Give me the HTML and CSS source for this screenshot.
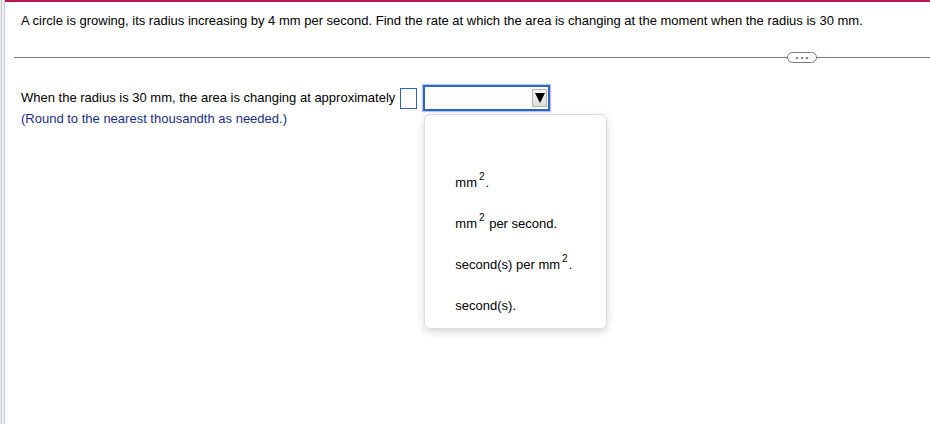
FILE: index.html
```html
<!DOCTYPE html>
<html lang="en">
<head>
<meta charset="utf-8">
<title>Related rates</title>
<link rel="stylesheet" href="styles.css">
</head>
<body>
<div class="page">
  <div class="content">
    <p class="question">A circle is growing, its radius increasing by 4 mm per second. Find the rate at which the area is changing at the moment when the radius is 30 mm.</p>
    <div class="divider">
      <span class="pill"><span class="dot"></span><span class="dot"></span><span class="dot"></span></span>
    </div>
    <div class="answer-row">
      <span class="answer-text">When the radius is 30 mm, the area is changing at approximately</span>
      <span class="num-box"></span>
      <span class="select-wrap">
        <span class="select">
          <span class="arrow-btn"><span class="tri"></span></span>
        </span>
        <div class="menu">
          <div class="item"><span class="label"></span></div>
          <div class="item"><span class="label">mm<sup class="sq">2</sup>.</span></div>
          <div class="item"><span class="label">mm<sup class="sq">2</sup> per second.</span></div>
          <div class="item"><span class="label">second(s) per mm<sup class="sq">2</sup>.</span></div>
          <div class="item"><span class="label">second(s).</span></div>
        </div>
      </span>
    </div>
    <p class="hint">(Round to the nearest thousandth as needed.)</p>
  </div>
</div>
</body>
</html>
```

FILE: styles.css
```css
html, body {
  margin: 0;
  padding: 0;
  height: 100%;
}
body {
  font-family: "Liberation Sans", Arial, sans-serif;
  font-size: 13px;
  color: #000;
  background: linear-gradient(to right, #ececec 0 1px, #c9c9c9 1px 2px, #f3f3f3 2px 4px, #b9c6dd 4px 5px, #ffffff 5px);
}
.page {
  margin-left: 5px;
  min-height: 100%;
  border-top: 2px solid #b8174f;
  box-sizing: border-box;
}
.content {
  padding: 11px 0 0 16px;
}
.question {
  margin: 0;
  line-height: 16px;
}
.divider {
  position: relative;
  margin: 28px 0 0 -7px;
  height: 1px;
  background: #6f7d8f;
}
.pill {
  position: absolute;
  left: 773px;
  top: -5px;
  width: 28px;
  height: 9px;
  border: 1px solid #6f7d8f;
  border-radius: 6px;
  background: #fff;
  display: flex;
  align-items: center;
  justify-content: center;
  gap: 3px;
}
.dot {
  width: 2px;
  height: 2px;
  background: #4d5a6b;
  border-radius: 1px;
}
.answer-row {
  display: flex;
  align-items: center;
  margin-top: 27px;
  height: 26px;
}
.answer-text {
  line-height: 15px;
  margin-top: -2px;
}
.num-box {
  width: 15px;
  height: 19px;
  border: 1px solid #2f62c0;
  margin-left: 5px;
  background: #fff;
}
.select-wrap {
  position: relative;
  margin-left: 6px;
}
.select {
  display: flex;
  align-items: center;
  justify-content: flex-end;
  box-sizing: border-box;
  width: 127px;
  height: 26px;
  border: 2px solid #2d64cc;
  box-shadow: 0 0 1px 1px rgba(45, 100, 204, 0.35);
  padding-right: 1px;
  background: #fff;
}
.arrow-btn {
  box-sizing: border-box;
  width: 15px;
  height: 18px;
  border: 1px solid #b4b4b4;
  background: linear-gradient(#f4f4f4, #dcdcdc);
  display: flex;
  align-items: center;
  justify-content: center;
}
.tri {
  width: 0;
  height: 0;
  border-left: 5px solid transparent;
  border-right: 5px solid transparent;
  border-top: 10px solid #000;
}
.menu {
  position: absolute;
  left: 1px;
  top: 29px;
  box-sizing: border-box;
  width: 183px;
  height: 215px;
  padding: 6px 0 3px 30px;
  border: 1px solid #dcdcdc;
  border-radius: 6px;
  background: #fff;
  box-shadow: 0 3px 8px rgba(0, 0, 0, 0.16);
  z-index: 2;
}
.item {
  height: 41px;
  display: flex;
  align-items: center;
}
.label {
  display: block;
  line-height: 15px;
  white-space: nowrap;
}
.sq {
  font-size: 10px;
  line-height: 0;
  vertical-align: 7px;
  margin-left: 2px;
  margin-right: 1px;
}
.hint {
  margin: 0;
  line-height: 15px;
  color: #1c2e8c;
}
```
